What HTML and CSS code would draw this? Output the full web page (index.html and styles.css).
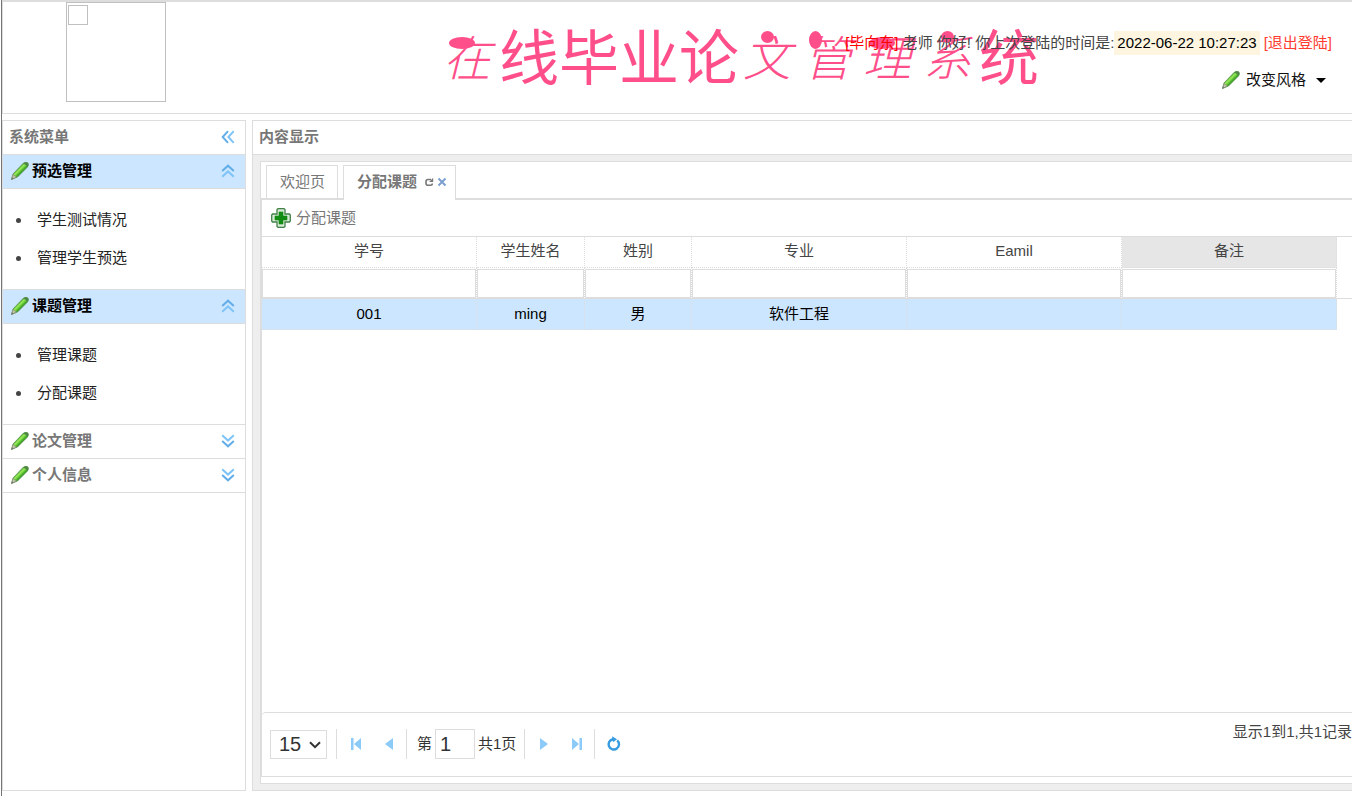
FILE: index.html
```html
<!DOCTYPE html>
<html lang="zh-CN">
<head>
<meta charset="utf-8">
<title>在线毕业论文管理系统</title>
<link rel="stylesheet" href="styles.css">
</head>
<body>
<svg class="defs" aria-hidden="true">
  <defs>
    <linearGradient id="green" gradientUnits="userSpaceOnUse" x1="6" y1="6" x2="13" y2="13">
      <stop offset="0.150" stop-color="#1d8a12"/><stop offset="0.450" stop-color="#a0ec5e"/><stop offset="0.600" stop-color="#62c835"/><stop offset="0.900" stop-color="#167a10"/>
    </linearGradient>
    <symbol id="pencil" viewBox="0 0 20 20">
      <path d="M1.500 18.500L3 13L13 2.500Q16 0.500 18 2Q19 4 17.500 6L7.500 16Z" fill="url(#green)" stroke="#5a8f52" stroke-width="0.700"/>
      <path d="M13 2.500Q16 0.500 18 2Q19 4 17.500 6Q16.500 3.500 13 2.500Z" fill="#4f8747"/>
      <path d="M1.500 18.500L3 13.500L6.500 16Z" fill="#c4c4a8" stroke="#7b8a70" stroke-width="0.600"/>
      <path d="M1.200 18.800L2 16.300L3.800 17.500Z" fill="#777"/>
    </symbol>
    <symbol id="double" viewBox="0 0 14 14">
      <path d="M1.200 7L7 1.700L12.800 7" fill="none" stroke="#62aee9" stroke-width="2"/>
      <path d="M1.200 12.700L7 7.400L12.800 12.700" fill="none" stroke="#7fc4f7" stroke-width="2"/>
    </symbol>
  </defs>
</svg>
<div class="page">
  <header class="banner">
    <div class="logo"><span class="missing"></span></div>
    <h1 class="title"><span class="brush broad">在</span><span>线毕业论</span><span class="brush">文</span><span class="brush side">管</span><span class="brush broad">理</span><span class="brush">系</span><span>统</span></h1>
    <div class="account">
      <div class="greeting"><span class="name">[毕向东]</span> 老师 你好! 你上次登陆的时间是:<time>2022-06-22 10:27:23</time><a class="logout" href="#">[退出登陆]</a></div>
      <button class="theme" type="button"><svg class="pencil"><use href="#pencil"/></svg><span>改变风格</span><svg class="caret" viewBox="0 0 10 5"><path d="M0 0H10L5 5Z"/></svg></button>
    </div>
  </header>
  <div class="main">
    <nav class="panel sidebar">
      <div class="panel-head"><h2>系统菜单</h2><button type="button" class="tool" aria-label="收起菜单"><svg class="chev left"><use href="#double"/></svg></button></div>
      <section>
        <button class="group open" type="button"><svg class="pencil"><use href="#pencil"/></svg><span>预选管理</span><svg class="chev"><use href="#double"/></svg></button>
        <ul><li><a href="#">学生测试情况</a></li><li><a href="#">管理学生预选</a></li></ul>
      </section>
      <section>
        <button class="group open" type="button"><svg class="pencil"><use href="#pencil"/></svg><span>课题管理</span><svg class="chev"><use href="#double"/></svg></button>
        <ul><li><a href="#">管理课题</a></li><li><a href="#">分配课题</a></li></ul>
      </section>
      <button class="group" type="button"><svg class="pencil"><use href="#pencil"/></svg><span>论文管理</span><svg class="chev down"><use href="#double"/></svg></button>
      <button class="group" type="button"><svg class="pencil"><use href="#pencil"/></svg><span>个人信息</span><svg class="chev down"><use href="#double"/></svg></button>
    </nav>
    <main class="panel content">
      <div class="panel-head"><h2>内容显示</h2></div>
      <div class="well">
        <div class="tabs">
          <div class="tabbar">
            <button class="tab" type="button">欢迎页</button>
            <div class="tab active"><span>分配课题</span>
              <button type="button" class="mini" aria-label="刷新"><svg viewBox="0 0 10 10"><path d="M7 2.500H4Q2 2.500 2 4.500V6.200Q2 8.200 4 8.200H6.500Q8.300 8.200 8.300 6.500" fill="none" stroke="#777" stroke-width="1.600"/><path d="M5.200 5L9.200 5V0.800Z" fill="#777"/></svg></button>
              <button type="button" class="mini" aria-label="关闭"><svg viewBox="0 0 10 10"><path d="M1.500 1.500L8.500 8.500M8.500 1.500L1.500 8.500" stroke="#7c9fd0" stroke-width="2"/></svg></button>
            </div>
          </div>
          <div class="grid">
            <div class="toolbar"><button type="button" class="assign"><svg viewBox="0 0 20 20"><path d="M6 1.500L7 0.700H13L14 1.500V6H18.500L19.300 7V13L18.500 14H14V18.500L13 19.300H7L6 18.500V14H1.500L0.700 13V7L1.500 6H6Z" fill="#d5ead5" stroke="#438049" stroke-width="1.300"/><path d="M8 4H12V8H16V12H12V16H8V12H4V8H8Z" fill="#128c12" stroke="#128c12" stroke-width="0.600"/></svg>分配课题</button></div>
            <table>
              <colgroup><col class="wide"><col class="medium"><col class="narrow"><col class="wide"><col class="wide"><col class="wide"><col></colgroup>
              <thead>
                <tr><th>学号</th><th>学生姓名</th><th>姓别</th><th>专业</th><th>Eamil</th><th class="hover">备注</th><td class="rest"></td></tr>
                <tr class="filters"><td><input type="text" aria-label="学号"></td><td><input type="text" aria-label="学生姓名"></td><td><input type="text" aria-label="姓别"></td><td><input type="text" aria-label="专业"></td><td><input type="text" aria-label="Eamil"></td><td><input type="text" aria-label="备注"></td><td class="rest"></td></tr>
              </thead>
              <tbody>
                <tr class="selected"><td>001</td><td>ming</td><td>男</td><td>软件工程</td><td></td><td></td><td class="rest"></td></tr>
              </tbody>
            </table>
            <div class="pager">
              <div class="controls">
                <div class="size"><select aria-label="每页记录数"><option>15</option></select><svg viewBox="0 0 12 8"><path d="M1 1.200L6 6.200L11 1.200" fill="none" stroke="#333" stroke-width="2"/></svg></div>
                <i class="sep"></i>
                <button type="button" aria-label="首页"><svg viewBox="0 0 16 16"><path d="M3 2H5.500V14H3ZM13 2V14L6 8Z"/></svg></button>
                <button type="button" aria-label="上一页"><svg viewBox="0 0 16 16"><path d="M12 2V14L4 8Z"/></svg></button>
                <i class="sep"></i>
                <label class="goto"><span>第</span><input type="text" value="1"><span>共1页</span></label>
                <i class="sep"></i>
                <button type="button" aria-label="下一页"><svg viewBox="0 0 16 16"><path d="M4 2V14L12 8Z"/></svg></button>
                <button type="button" aria-label="末页"><svg viewBox="0 0 16 16"><path d="M3 2V14L10 8ZM10.500 2H13V14H10.500Z"/></svg></button>
                <i class="sep"></i>
                <button type="button" aria-label="刷新"><svg viewBox="0 0 16 16"><path d="M7 3.200A5.200 5.200 0 1 0 11.200 4.400" fill="none" stroke="#369be0" stroke-width="2.400"/><path class="tip" d="M6 0.200L11 3.200L7 6.200Z"/></svg></button>
              </div>
              <div class="summary">显示1到1,共1记录</div>
            </div>
          </div>
        </div>
      </div>
    </main>
  </div>
</div>
</body>
</html>
```
FILE: styles.css
```css
* { box-sizing: border-box; }
body { margin: 0; background: #fff; color: #444; font: 15px/20px "Liberation Sans", "Noto Sans CJK SC", sans-serif; overflow: hidden; }
button { margin: 0; padding: 0; border: 0; background: none; font: inherit; color: inherit; cursor: pointer; }
a { text-decoration: none; }
input, select { font-family: inherit; border: 1px solid #ddd; border-radius: 0; background: #fff; color: #333; }
svg { display: block; flex: none; }
.defs { position: absolute; width: 0; height: 0; }
.page { display: flex; flex-direction: column; gap: 6px; height: 100vh; margin-left: 1px; padding-bottom: 5px; border-left: 1px solid #737577; }

.banner { position: relative; flex: none; display: flex; height: 114px; border: 1px solid #ddd; border-top-width: 2px; border-right: 0; }
.logo { width: 100px; height: 100px; margin-left: 63px; padding: 2px 1px; border: 1px solid #c0c0c0; }
.missing { display: block; width: 20px; height: 20px; border: 1px solid #c0c0c0; }
.title { display: flex; align-items: center; height: 110px; margin: 3px 0 0 273px; color: #ff4f8b; font-size: 60px; font-weight: 400; line-height: 110px; white-space: nowrap; }
.brush { position: relative; width: 60px; padding-right: 4px; text-align: center; font-size: 48px; font-weight: 300; font-style: italic; }
.brush::before { content: ""; position: absolute; top: 26px; left: 22px; width: 13px; height: 12px; border-radius: 50%; background: currentColor; }
.broad::before { top: 32px; left: 10px; width: 26px; height: 12px; }
.side::before { left: 10px; height: 18px; }
.account { position: absolute; top: 29px; right: 20px; display: flex; flex-direction: column; align-items: flex-end; gap: 15px; }
.greeting { display: flex; align-items: center; white-space: pre; }
.name { color: #f00; }
.greeting time { padding: 2px 3px; margin-right: 4px; background: #fdf5df; color: #000; }
.logout { color: #ff3b30; }
.theme { display: flex; align-items: center; margin-right: 6px; color: #111; }
.theme span { margin: 0 10px 0 5px; }
.pencil { width: 20px; height: 20px; }
.caret { width: 10px; height: 5px; fill: #000; }

.main { flex: 1; display: flex; gap: 6px; min-height: 0; }
.panel { display: flex; flex-direction: column; border: 1px solid #ddd; }
.panel-head { flex: none; display: flex; align-items: center; justify-content: space-between; height: 34px; padding: 0 10px 2px 6px; border-bottom: 1px solid #ddd; }
.panel-head h2 { margin: 0; font-size: 15px; color: #777; }
.sidebar { flex: none; width: 244px; }
.chev { width: 14px; height: 14px; }
.left { transform: rotate(-90deg); }
.down { transform: rotate(180deg); }
.group { flex: none; display: flex; align-items: center; width: 100%; height: 34px; padding: 0 10px 1px 7px; border-bottom: 1px solid #ddd; color: #777; font-weight: 700; }
.group span { flex: 1; padding-left: 2px; text-align: left; }
.open { background: #cce6ff; color: #000; }
.sidebar ul { margin: 0; padding: 12px 0 12px 13px; border-bottom: 1px solid #ddd; list-style: none; }
.sidebar li { display: flex; align-items: center; gap: 16px; line-height: 38px; }
.sidebar li::before { content: ""; width: 5px; height: 5px; border-radius: 50%; background: #444; }
.sidebar a { color: #222; }

.content { flex: 1; min-width: 0; border-right: 0; }
.well { flex: 1; display: flex; min-height: 0; padding: 6px 0 6px 7px; background: #eee; }
.tabs { flex: 1; display: flex; flex-direction: column; min-width: 0; padding-bottom: 6px; border: 1px solid #ddd; border-right: 0; background: #fff; }
.tabbar { flex: none; display: flex; align-items: flex-end; gap: 5px; height: 38px; padding-left: 5px; border-bottom: 2px solid #ddd; }
.tab { display: flex; align-items: center; height: 33px; padding: 0 13px; border: 1px solid #ddd; border-bottom: 0; color: #777; }
button.tab { padding: 0 12px 0 13px; }
.active { height: 35px; margin-bottom: -2px; padding: 0 7px 2px 13px; background: #fff; font-weight: 700; }
.active span { margin-right: 6px; }
.mini { padding: 0 1px; }
.mini + .mini { margin-left: 1px; }
.mini svg { width: 10px; height: 10px; }
.grid { flex: 1; display: flex; flex-direction: column; min-height: 0; border-left: 1px solid #ddd; border-bottom: 1px solid #ddd; }
.toolbar { flex: none; height: 37px; padding: 8px 9px; border-bottom: 1px solid #ddd; }
.assign { display: flex; gap: 5px; color: #777; }
.assign svg { width: 20px; height: 20px; }

table { flex: none; width: 100%; table-layout: fixed; border-spacing: 0; text-align: center; }
.wide { width: 215px; }
.medium { width: 108px; }
.narrow { width: 107px; }
th, td { height: 31px; padding: 0; border: 0 dotted #ddd; border-width: 0 1px 1px 0; }
th { padding-bottom: 3px; font-weight: 400; }
.hover { background: #e6e6e6; }
.rest { border: 0; }
.filters td { border-bottom: 1px solid #ddd; }
.filters input { display: block; width: 100%; height: 29px; }
.selected td { color: #000; }
.selected td:not(.rest) { background: #cce6ff; }

.pager { display: flex; justify-content: space-between; height: 64px; margin-top: auto; border-top: 1px solid #ddd; border-top-left-radius: 4px; }
.controls { display: flex; align-items: center; padding: 0 0 1px 8px; }
.size { position: relative; }
.size svg { position: absolute; top: 11px; right: 6px; width: 12px; height: 8px; pointer-events: none; }
select { display: block; appearance: none; width: 57px; height: 29px; padding: 0 8px; font-size: 20px; }
.sep { width: 1px; height: 30px; margin: 0 2px 0 9px; background: #ddd; }
.sep + button { margin-left: 1px; }
.controls button { width: 33px; padding-left: 8px; }
.controls button + .sep { margin-left: 0; }
.controls button svg { width: 16px; height: 16px; fill: #8ccaf7; }
.controls button .tip { fill: #369be0; }
.goto { display: flex; align-items: center; gap: 3px; padding-left: 8px; color: #333; }
.goto input { width: 40px; height: 30px; padding: 0 4px; font-size: 20px; }
.goto + .sep { margin-left: 8px; }
.summary { padding-top: 9px; }
```
